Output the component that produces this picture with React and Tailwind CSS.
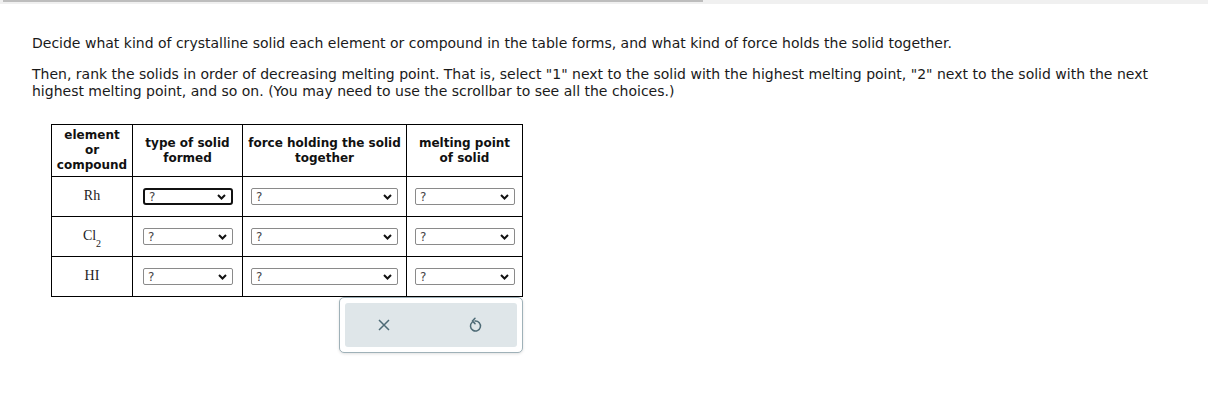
import React from "react";

function Chevron() {
  return (
    <svg width="9" height="6" viewBox="0 0 9 6" className="shrink-0">
      <path d="M1 1 L4.5 4.5 L8 1" fill="none" stroke="#111" strokeWidth="2" />
    </svg>
  );
}

function FakeSelect({ width, focused }) {
  return (
    <div
      className={`flex items-center justify-between h-[17px] pl-[4px] pr-[5px] bg-white ${
        focused
          ? "border-2 border-[#111] rounded-[3px]"
          : "border border-[#8a8a8a] rounded-[2px]"
      }`}
      style={{ width }}
    >
      <span className="text-[12px] leading-none text-[#444] font-['DejaVu_Sans',sans-serif]">
        ?
      </span>
      <Chevron />
    </div>
  );
}

const rows = [
  { name: <>Rh</> },
  {
    name: (
      <>
        Cl<sub className="text-[10px] align-[-4px]">2</sub>
      </>
    ),
  },
  { name: <>HI</> },
];

export default function App() {
  return (
    <div className="w-[1208px] h-[404px] bg-white font-['DejaVu_Sans',Verdana,sans-serif] text-[#1a1a1a] overflow-hidden">
      {/* progress strip */}
      <div className="h-[4px] bg-[#f0f0f0] pl-[3px]">
        <div className="h-[2px] w-[700px] bg-[#bdbdbd]" />
      </div>

      <div className="pl-[32px] pt-[31px] text-[14px] leading-[17px]">
        <p>
          Decide what kind of crystalline solid each element or compound in the
          table forms, and what kind of force holds the solid together.
        </p>
        <p className="mt-[14px] w-[1140px]">
          Then, rank the solids in order of decreasing melting point. That is,
          select "1" next to the solid with the highest melting point, "2" next
          to the solid with the next highest melting point, and so on. (You may
          need to use the scrollbar to see all the choices.)
        </p>
      </div>

      <div className="pl-[51px] pt-[24px]">
        <table className="border-collapse border border-black">
          <thead>
            <tr className="h-[52px] text-[12px] leading-[15px] font-bold text-[#111] text-center">
              <th className="border border-black w-[81px] px-[2px]">
                element
                <br />
                or
                <br />
                compound
              </th>
              <th className="border border-black w-[110px]">
                type of solid
                <br />
                formed
              </th>
              <th className="border border-black w-[164px]">
                force holding the solid
                <br />
                together
              </th>
              <th className="border border-black w-[116px]">
                melting point
                <br />
                of solid
              </th>
            </tr>
          </thead>
          <tbody>
            {rows.map((r, i) => (
              <tr key={i} className="h-[40px]">
                <td className="border border-black text-center align-top pt-[8px] font-['Liberation_Serif',serif] text-[14px] text-[#222]">
                  {r.name}
                </td>
                <td className="border border-black align-top pt-[11px] pl-[10px]">
                  <FakeSelect width={90} focused={i === 0} />
                </td>
                <td className="border border-black align-top pt-[11px] pl-[8px]">
                  <FakeSelect width={147} />
                </td>
                <td className="border border-black align-top pt-[11px] pl-[8px]">
                  <FakeSelect width={100} />
                </td>
              </tr>
            ))}
          </tbody>
        </table>

        <div className="ml-[288px] w-[184px] h-[56px] border border-[#9fb1b8] rounded-[5px] shadow-[0_1px_3px_rgba(0,0,0,0.12)] p-[5px] bg-white">
          <div className="h-full bg-[#dfe6e9] rounded-[3px] flex items-center justify-between pl-[32px] pr-[35px]">
            <svg width="14" height="14" viewBox="0 0 14 14">
              <path
                d="M2 2 L12 12 M12 2 L2 12"
                stroke="#4d6a75"
                strokeWidth="1.5"
                fill="none"
              />
            </svg>
            <svg width="14" height="16" viewBox="0 0 14 16">
              <path
                d="M4.2 5.2 A5 5 0 1 0 7 4"
                stroke="#4d6a75"
                strokeWidth="1.5"
                fill="none"
                strokeLinecap="round"
              />
              <path
                d="M7 1.2 L4.4 4 L7 6.6"
                stroke="#4d6a75"
                strokeWidth="1.5"
                fill="none"
                strokeLinecap="round"
                strokeLinejoin="round"
              />
            </svg>
          </div>
        </div>
      </div>
    </div>
  );
}
